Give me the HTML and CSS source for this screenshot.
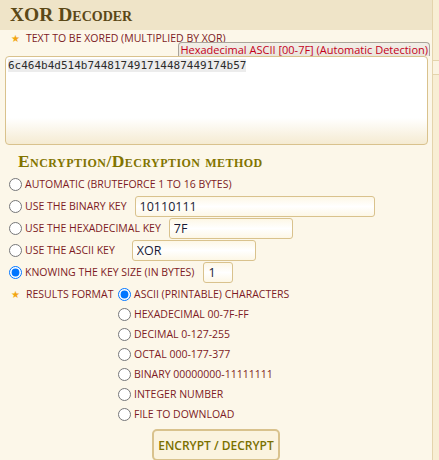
FILE: index.html
```html
<!DOCTYPE html>
<html>
<head>
<meta charset="utf-8">
<link rel="stylesheet" href="styles.css">
</head>
<body>
<div class="page">
  <div class="panel">
    <h1 class="title">XOR Decoder</h1>
    <div class="content">
      <div class="field-label"><span class="star">★</span>TEXT TO BE XORED (MULTIPLIED BY XOR)</div>
      <div class="detect-row"><span class="detect">Hexadecimal ASCII [00-7F] (Automatic Detection)</span></div>
      <div class="textarea"><span class="sel">6c464b4d514b744817491714487449174b57</span></div>
      <h2 class="section">Encryption/Decryption method</h2>
      <div class="methods">
        <label class="row"><input type="radio" name="m"><span>AUTOMATIC (BRUTEFORCE 1 TO 16 BYTES)</span></label>
        <label class="row"><input type="radio" name="m"><span>USE THE BINARY KEY</span><input class="text w-bin" type="text" value="10110111"></label>
        <label class="row"><input type="radio" name="m"><span>USE THE HEXADECIMAL KEY</span><input class="text w-hex" type="text" value="7F"></label>
        <label class="row"><input type="radio" name="m"><span>USE THE ASCII KEY</span><input class="text w-ascii" type="text" value="XOR"></label>
        <label class="row"><input type="radio" name="m" checked><span>KNOWING THE KEY SIZE (IN BYTES)</span><input class="text w-size" type="text" value="1"></label>
      </div>
      <div class="results">
        <div class="res-label"><span class="star">★</span>RESULTS FORMAT</div>
        <div class="res-list">
          <label class="opt"><input type="radio" name="f" checked><span>ASCII (PRINTABLE) CHARACTERS</span></label>
          <label class="opt"><input type="radio" name="f"><span>HEXADECIMAL 00-7F-FF</span></label>
          <label class="opt"><input type="radio" name="f"><span>DECIMAL 0-127-255</span></label>
          <label class="opt"><input type="radio" name="f"><span>OCTAL 000-177-377</span></label>
          <label class="opt"><input type="radio" name="f"><span>BINARY 00000000-11111111</span></label>
          <label class="opt"><input type="radio" name="f"><span>INTEGER NUMBER</span></label>
          <label class="opt"><input type="radio" name="f"><span>FILE TO DOWNLOAD</span></label>
        </div>
      </div>
      <div class="actions"><button class="btn">ENCRYPT / DECRYPT</button></div>
    </div>
  </div>
  <div class="side"><div class="side-box"></div></div>
</div>
</body>
</html>
```
FILE: styles.css
```css
html, body {
  margin: 0;
  padding: 0;
  background: #f7edd2;
}
.page {
  display: flex;
  width: 439px;
  height: 460px;
  overflow: hidden;
}
.panel {
  width: 432px;
  flex: none;
  background: #fcf7e9;
  border-right: 1px solid #e4d4ac;
  font-family: "Open Sans", "DejaVu Sans", sans-serif;
}
.side {
  flex: 1;
  background: #f8eed4;
  padding-top: 60px;
}
.side-box {
  height: 13px;
  border-top: 1px solid #e4d4ac;
  border-bottom: 1px solid #e4d4ac;
  background: #fbf4e2;
}
.title {
  margin: 0;
  height: 30px;
  box-sizing: border-box;
  padding: 4px 0 0 10px;
  background: #efe4c8;
  font-family: "Liberation Serif", "DejaVu Serif", serif;
  font-variant: small-caps;
  font-weight: bold;
  font-size: 19.5px;
  line-height: 22px;
  color: #5b4817;
}
.content {
  padding: 1px 0 0 0;
}
.field-label {
  display: flex;
  align-items: center;
  height: 13px;
  font-size: 10.5px;
  color: #7d1a24;
  padding-left: 11px;
}
.star {
  color: #f2a510;
  font-size: 10px;
  width: 15px;
  display: inline-block;
}
.detect-row {
  display: flex;
  justify-content: flex-end;
  padding-right: 2px;
  margin-top: -2px;
}
.detect {
  font-size: 11px;
  line-height: 13px;
  color: #c4001a;
  padding: 0 1px 0 1px;
  border: 1px solid #a9a49a;
  border-bottom: none;
  border-radius: 4px 4px 0 0;
  background: linear-gradient(#f2efe8, #e9e5dc);
}
.textarea {
  margin: 0 4px 0 5px;
  height: 89px;
  box-sizing: border-box;
  border: 1px solid #d9c28d;
  border-radius: 4px;
  background: linear-gradient(#ffffff 0%, #ffffff 70%, #f5ebd2 100%);
  padding: 2px 2px;
  font-family: "DejaVu Sans Mono", monospace;
  font-size: 11px;
  line-height: 14px;
  color: #2b2b2b;
}
.sel {
  background: #ececec;
}
.section {
  margin: 6px 0 2px 18px;
  font-family: "Liberation Serif", "DejaVu Serif", serif;
  font-variant: small-caps;
  font-weight: bold;
  font-size: 17.5px;
  line-height: 20px;
  letter-spacing: 0.45px;
  color: #827400;
}
.methods {
  display: flex;
  flex-direction: column;
}
.row {
  display: flex;
  align-items: center;
  height: 22px;
  padding-left: 9px;
  font-size: 10.5px;
  color: #7d1a24;
}
.row input[type=radio], .opt input[type=radio] {
  width: 13px;
  height: 13px;
  margin: 0 3px 0 0;
  flex: none;
}
.text {
  height: 21px;
  box-sizing: border-box;
  border: 1px solid #d9c28d;
  border-radius: 3px;
  background: linear-gradient(#fdf7e6, #ffffff 50%, #fdf7e6);
  font-family: "Open Sans", "DejaVu Sans", sans-serif;
  font-size: 12.5px;
  color: #1a1a33;
  padding: 0 4px;
  margin-left: 8px;
}
.w-bin { width: 240px; }
.w-hex { width: 124px; }
.w-ascii { width: 124px; margin-left: 17px; }
.w-size { width: 30px; margin-left: 9px; }
.results {
  display: flex;
  margin-top: 1px;
}
.res-label {
  display: flex;
  align-items: center;
  height: 20px;
  padding-left: 11px;
  width: 107px;
  flex: none;
  font-size: 10.5px;
  color: #7d1a24;
}
.res-list {
  display: flex;
  flex-direction: column;
}
.opt {
  display: flex;
  align-items: center;
  height: 20px;
  font-size: 10.5px;
  color: #7d1a24;
}
.actions {
  padding: 5px 0 0 152px;
}
.btn {
  width: 128px;
  height: 32px;
  border: 2px solid #d9c28d;
  border-radius: 5px;
  background: #fbf3df;
  font-family: "Open Sans", "DejaVu Sans", sans-serif;
  font-size: 12px;
  font-weight: 600;
  color: #7a7000;
  padding: 0;
}
```
